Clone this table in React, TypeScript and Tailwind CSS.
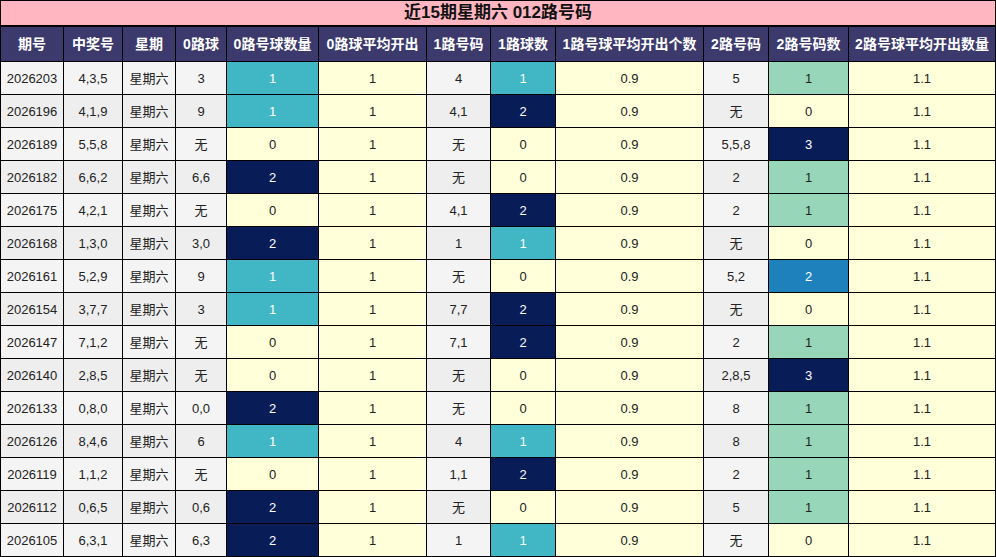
type Row = string[]

const headers = ['期号', '中奖号', '星期', '0路球', '0路号球数量', '0路球平均开出', '1路号码', '1路球数', '1路号球平均开出个数', '2路号码', '2路号码数', '2路号球平均开出数量']

const rows: Row[] = [
  ['2026203', '4,3,5', '星期六', '3', '1', '1', '4', '1', '0.9', '5', '1', '1.1'],
  ['2026196', '4,1,9', '星期六', '9', '1', '1', '4,1', '2', '0.9', '无', '0', '1.1'],
  ['2026189', '5,5,8', '星期六', '无', '0', '1', '无', '0', '0.9', '5,5,8', '3', '1.1'],
  ['2026182', '6,6,2', '星期六', '6,6', '2', '1', '无', '0', '0.9', '2', '1', '1.1'],
  ['2026175', '4,2,1', '星期六', '无', '0', '1', '4,1', '2', '0.9', '2', '1', '1.1'],
  ['2026168', '1,3,0', '星期六', '3,0', '2', '1', '1', '1', '0.9', '无', '0', '1.1'],
  ['2026161', '5,2,9', '星期六', '9', '1', '1', '无', '0', '0.9', '5,2', '2', '1.1'],
  ['2026154', '3,7,7', '星期六', '3', '1', '1', '7,7', '2', '0.9', '无', '0', '1.1'],
  ['2026147', '7,1,2', '星期六', '无', '0', '1', '7,1', '2', '0.9', '2', '1', '1.1'],
  ['2026140', '2,8,5', '星期六', '无', '0', '1', '无', '0', '0.9', '2,8,5', '3', '1.1'],
  ['2026133', '0,8,0', '星期六', '0,0', '2', '1', '无', '0', '0.9', '8', '1', '1.1'],
  ['2026126', '8,4,6', '星期六', '6', '1', '1', '4', '1', '0.9', '8', '1', '1.1'],
  ['2026119', '1,1,2', '星期六', '无', '0', '1', '1,1', '2', '0.9', '2', '1', '1.1'],
  ['2026112', '0,6,5', '星期六', '0,6', '2', '1', '无', '0', '0.9', '5', '1', '1.1'],
  ['2026105', '6,3,1', '星期六', '6,3', '2', '1', '1', '1', '0.9', '无', '0', '1.1'],
]

const grayCols = [0, 1, 2, 3, 6, 9]

// count columns get a heat colour
function cellClass(col: number, v: string, odd: boolean) {
  if (grayCols.includes(col)) return odd ? 'bg-[#f4f4f4] text-[#222]' : 'bg-[#eeeeee] text-[#222]'
  if (col === 4 || col === 7) {
    if (v === '1') return 'bg-[#41b6c4] text-white'
    if (v === '2') return 'bg-[#081d58] text-white'
  }
  if (col === 10) {
    if (v === '1') return 'bg-[#97d6b9] text-[#222]'
    if (v === '2') return 'bg-[#1f81bc] text-white'
    if (v === '3') return 'bg-[#081d58] text-white'
  }
  return 'bg-[#ffffda] text-[#222]'
}

const gridCols = 'grid grid-cols-[63px_59px_53px_51px_92px_108px_64px_65px_148px_65px_80px_147px]'

export default function App() {
  return (
    <div className="w-[996px] h-[557px] bg-white font-['Liberation_Sans','Noto_Sans_CJK_SC',sans-serif]">
      <div className="border-l border-t border-black">
        <div className="h-[26px] bg-[#ffb6c1] border-b-2 border-r border-black flex items-center justify-center text-[17px] font-bold text-[#111]">
          近15期星期六 012路号码
        </div>
        <div className={gridCols}>
          {headers.map(h => (
            <div key={h} className="h-[35px] bg-[#3c3a6c] border-r border-b border-black flex items-center justify-center text-[14px] font-bold text-white whitespace-nowrap">
              {h}
            </div>
          ))}
        </div>
        {rows.map((r, i) => (
          <div key={r[0]} className={gridCols}>
            {r.map((v, c) => (
              <div key={c} className={`h-[33px] pt-px border-r border-b border-black flex items-center justify-center text-[13px] ${cellClass(c, v, i % 2 === 0)}`}>
                {v}
              </div>
            ))}
          </div>
        ))}
      </div>
    </div>
  )
}
